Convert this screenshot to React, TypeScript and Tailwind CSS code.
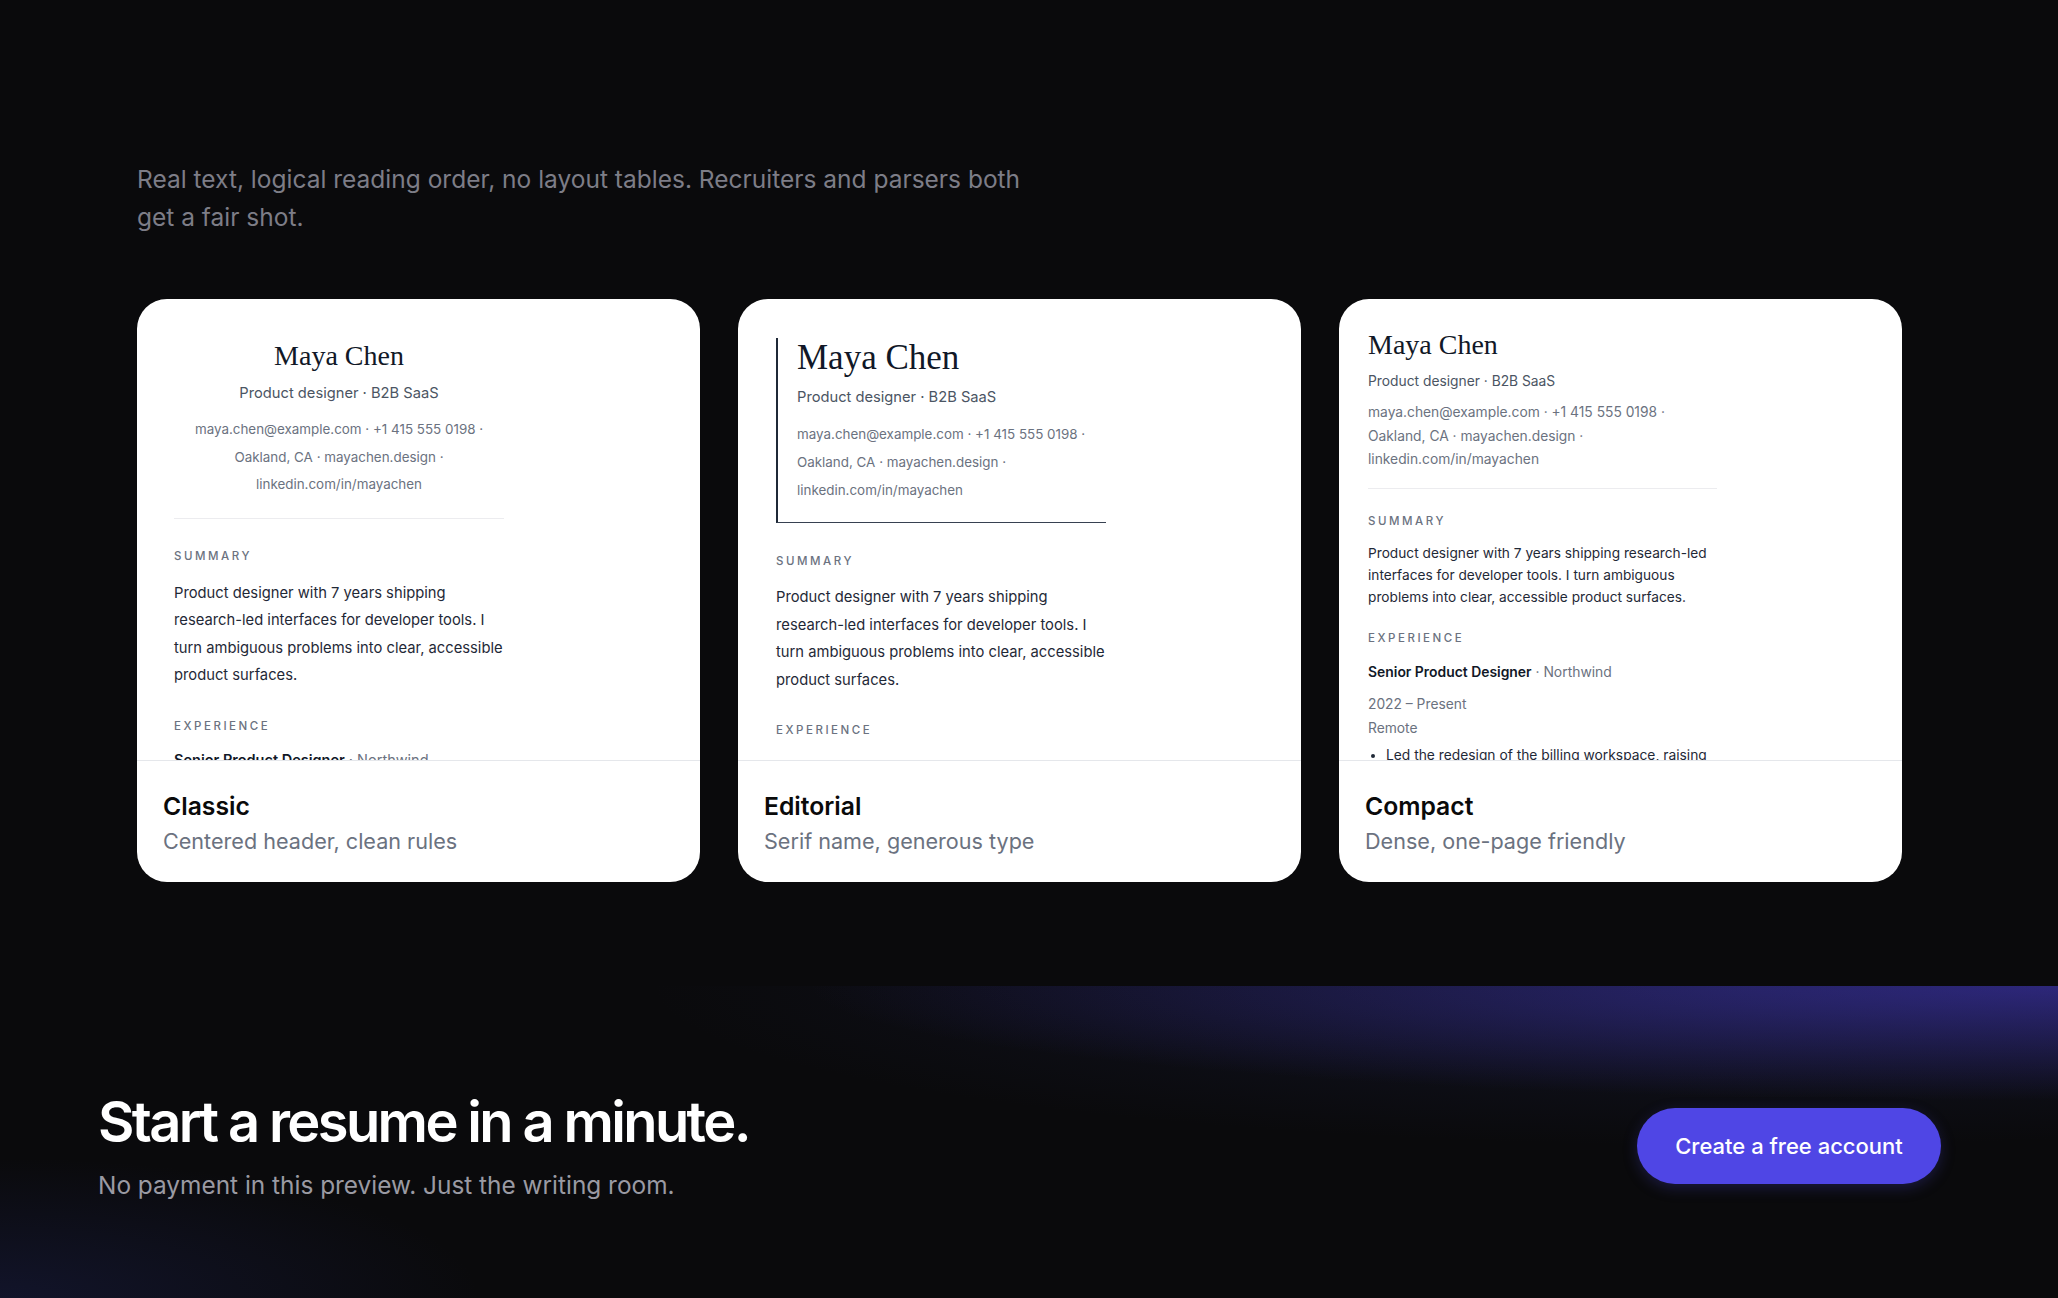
const CONTACT = ['maya.chen@example.com · +1 415 555 0198 ·', 'Oakland, CA · mayachen.design ·', 'linkedin.com/in/mayachen'];
const SUMMARY =
  'Product designer with 7 years shipping research-led interfaces for developer tools. I turn ambiguous problems into clear, accessible product surfaces.';

function Label({ children, className = '' }: { children: string; className?: string }) {
  return (
    <div className={`text-[11.5px] leading-4 font-medium uppercase tracking-[0.22em] text-[#6b7280] ${className}`}>
      {children}
    </div>
  );
}

function ClassicPreview() {
  return (
    <div className="w-[330px]">
      <div className="flex flex-col items-center border-b border-[#ececef] pb-[19px] text-center">
        <div className="font-['Liberation_Serif',serif] text-[28px] leading-[34px] text-[#111827]">Maya Chen</div>
        <div className="mt-[9px] text-[14.7px] leading-[22px] text-[#4b5563]">Product designer · B2B SaaS</div>
        <div className="mt-[12px] text-[13.4px] leading-[27.5px] text-[#6b7280]">
          {CONTACT.map((c) => (
            <div key={c}>{c}</div>
          ))}
        </div>
      </div>
      <Label className="mt-[29px]">Summary</Label>
      <p className="mt-[16px] text-[14.75px] leading-[27.5px] text-[#1f2937]">{SUMMARY}</p>
      <Label className="mt-[28px]">Experience</Label>
      <div className="mt-[15px] text-[14.5px] leading-[22px] text-[#111827]">
        <span className="font-semibold">Senior Product Designer</span>
        <span className="text-[#6b7280]"> · Northwind</span>
      </div>
    </div>
  );
}

function EditorialPreview() {
  return (
    <div className="w-[330px]">
      <div className="border-l-2 border-b border-l-[#1f2937] border-b-[#374151] pl-[19px] pb-[18px]">
        <div className="font-['Liberation_Serif',serif] text-[35px] leading-[40px] text-[#111827]">Maya Chen</div>
        <div className="mt-[8px] text-[14.7px] leading-[22px] text-[#4b5563]">Product designer · B2B SaaS</div>
        <div className="mt-[12px] text-[13.4px] leading-[28px] text-[#6b7280]">
          {CONTACT.map((c) => (
            <div key={c}>{c}</div>
          ))}
        </div>
      </div>
      <Label className="mt-[30px]">Summary</Label>
      <p className="mt-[15px] text-[14.75px] leading-[27.5px] text-[#1f2937]">{SUMMARY}</p>
      <Label className="mt-[28px]">Experience</Label>
    </div>
  );
}

function CompactPreview() {
  return (
    <div className="w-[349px]">
      <div className="border-b border-[#ececef] pb-[16px]">
        <div className="font-['Liberation_Serif',serif] text-[28px] leading-[34px] text-[#111827]">Maya Chen</div>
        <div className="mt-[9px] text-[13.8px] leading-[20px] text-[#4b5563]">Product designer · B2B SaaS</div>
        <div className="mt-[10px] text-[13.8px] leading-[23.5px] text-[#6b7280]">
          {CONTACT.map((c) => (
            <div key={c}>{c}</div>
          ))}
        </div>
      </div>
      <Label className="mt-[24px]">Summary</Label>
      <p className="mt-[13px] text-[13.7px] leading-[22.3px] text-[#1f2937]">{SUMMARY}</p>
      <Label className="mt-[22px]">Experience</Label>
      <div className="mt-[16px] text-[13.9px] leading-[20px] text-[#111827]">
        <span className="font-semibold">Senior Product Designer</span>
        <span className="text-[#6b7280]"> · Northwind</span>
      </div>
      <div className="mt-[11px] text-[13.8px] leading-[23.5px] text-[#6b7280]">
        <div>2022 – Present</div>
        <div>Remote</div>
      </div>
      <ul className="mt-[4px] list-disc pl-[18px] text-[13.8px] leading-[22px] text-[#1f2937]">
        <li>Led the redesign of the billing workspace, raising task completion by 18%.</li>
      </ul>
    </div>
  );
}

const TEMPLATES = [
  { name: 'Classic', blurb: 'Centered header, clean rules', pad: 'pt-[40px] pl-[37px]', Preview: ClassicPreview },
  { name: 'Editorial', blurb: 'Serif name, generous type', pad: 'pt-[39px] pl-[38px]', Preview: EditorialPreview },
  { name: 'Compact', blurb: 'Dense, one-page friendly', pad: 'pt-[29px] pl-[29px]', Preview: CompactPreview },
];

function TemplateCard({ t }: { t: (typeof TEMPLATES)[number] }) {
  const { Preview } = t;
  return (
    <div className="flex h-[583px] flex-col overflow-hidden rounded-[30px] bg-white">
      <div className={`h-[461px] overflow-hidden ${t.pad}`}>
        <Preview />
      </div>
      <div className="flex-1 border-t border-[#e5e7eb] px-[26px] pt-[29px]">
        <div className="text-[24.7px] leading-8 font-semibold text-[#0a0a0a]">{t.name}</div>
        <div className="mt-[5px] text-[21.6px] leading-7 text-[#6b7280]">{t.blurb}</div>
      </div>
    </div>
  );
}

export default function App() {
  return (
    <div className="min-h-[1298px] bg-[#0a0a0c] font-['Inter',sans-serif] antialiased">
      <section className="px-[137px] pt-[160px]">
        <p className="max-w-[910px] text-[24.5px] leading-[38px] text-[#7d7d87]">
          Real text, logical reading order, no layout tables. Recruiters and parsers both get a fair shot.
        </p>
        <div className="mt-[63px] grid grid-cols-[563px_563px_563px] gap-[38px]">
          {TEMPLATES.map((t) => (
            <TemplateCard key={t.name} t={t} />
          ))}
        </div>
      </section>

      <section className="mt-[104px] flex h-[312px] items-center justify-between pl-[98px] pr-[117px] pt-[8px] bg-[radial-gradient(ellipse_1250px_115px_at_100%_0%,rgba(76,62,220,0.48),transparent),radial-gradient(ellipse_1100px_160px_at_85%_0%,rgba(40,48,110,0.28),transparent),radial-gradient(ellipse_480px_140px_at_0%_100%,rgba(38,46,120,0.28),transparent)]">
        <div>
          <h2 className="text-[56px] leading-[62px] font-semibold tracking-[-0.047em] text-white">Start a resume in a minute.</h2>
          <p className="mt-[16px] text-[24.4px] leading-8 text-[#9a9aa3]">No payment in this preview. Just the writing room.</p>
        </div>
        <button className="h-[76px] w-[304px] rounded-full bg-[#4f46e5] text-[22px] font-medium text-white shadow-[0_4px_14px_rgba(49,46,129,0.45)]">
          Create a free account
        </button>
      </section>
    </div>
  );
}
